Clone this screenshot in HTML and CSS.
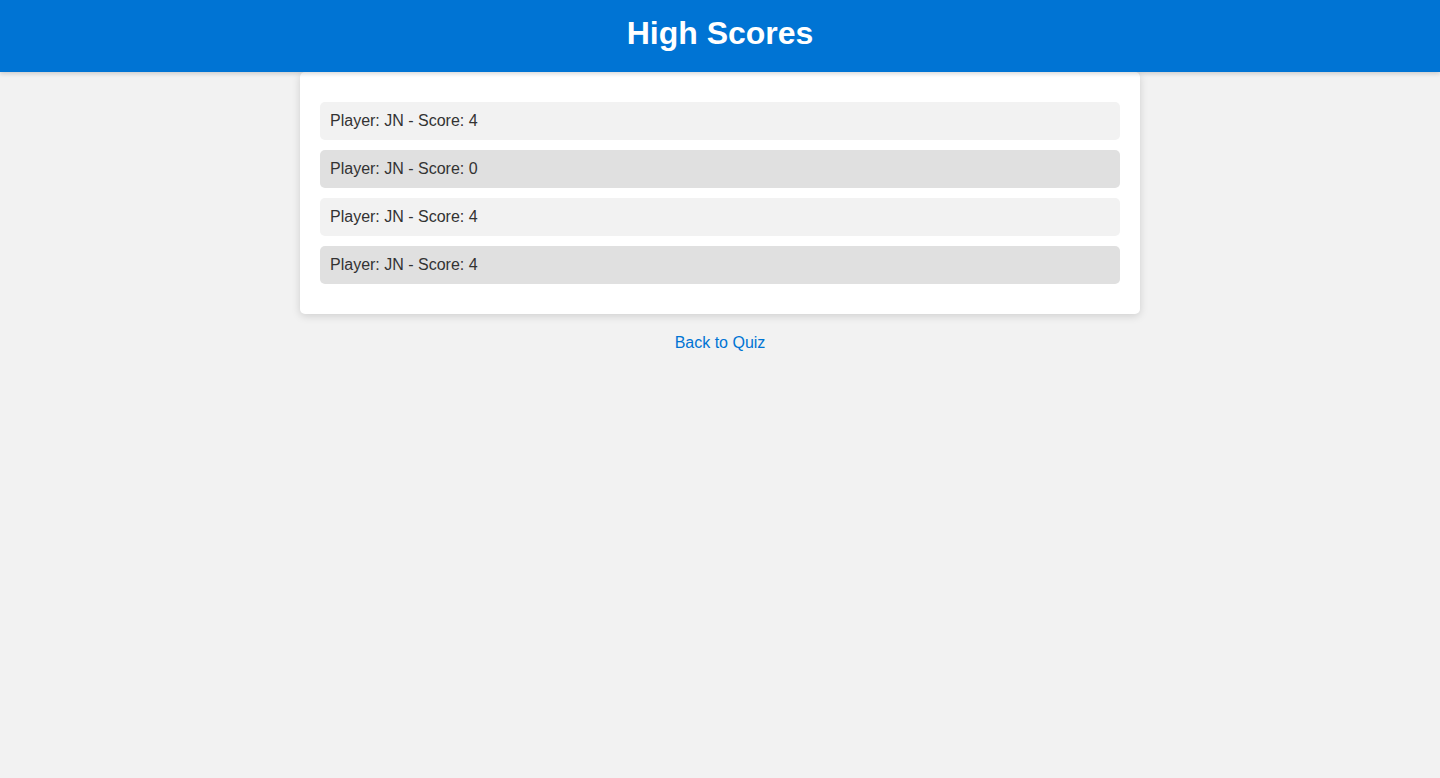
FILE: index.html
```html
<!DOCTYPE html>
<html lang="en">
<head>
<meta charset="utf-8">
<title>High Scores</title>
<link rel="stylesheet" href="styles.css">
</head>
<body>
<header class="site-header">
  <h1 class="title">High Scores</h1>
</header>
<main class="card">
  <ul class="scores">
    <li class="score">Player: JN - Score: 4</li>
    <li class="score">Player: JN - Score: 0</li>
    <li class="score">Player: JN - Score: 4</li>
    <li class="score">Player: JN - Score: 4</li>
  </ul>
</main>
<div class="back">
  <a class="back-link" href="#">Back to Quiz</a>
</div>
</body>
</html>
```

FILE: styles.css
```css
html, body {
  margin: 0;
  padding: 0;
}
body {
  background: #f2f2f2;
  font-family: "Liberation Sans", Arial, sans-serif;
  color: #333;
  font-size: 16px;
}
.site-header {
  background: #0074d4;
  height: 72px;
  display: flex;
  align-items: center;
  justify-content: center;
  box-shadow: 0 2px 4px rgba(0, 0, 0, 0.15);
  position: relative;
  z-index: 1;
}
.title {
  margin: 0;
  color: #fff;
  font-size: 32px;
  font-weight: bold;
  line-height: 40px;
  position: relative;
  top: -3px;
}
.card {
  display: block;
  width: 800px;
  margin: 0 auto;
  padding: 20px;
  background: #fff;
  border-radius: 5px;
  box-shadow: 0 2px 8px rgba(0, 0, 0, 0.15);
}
.scores {
  list-style: none;
  margin: 10px 0;
  padding: 0;
  display: flex;
  flex-direction: column;
  gap: 10px;
}
.score {
  padding: 10px;
  line-height: 18px;
  border-radius: 5px;
  background: #f2f2f2;
}
.score:nth-child(even) {
  background: #e0e0e0;
}
.back {
  text-align: center;
  margin-top: 20px;
  line-height: 18px;
}
.back-link {
  color: #0074d4;
  text-decoration: none;
}
```
